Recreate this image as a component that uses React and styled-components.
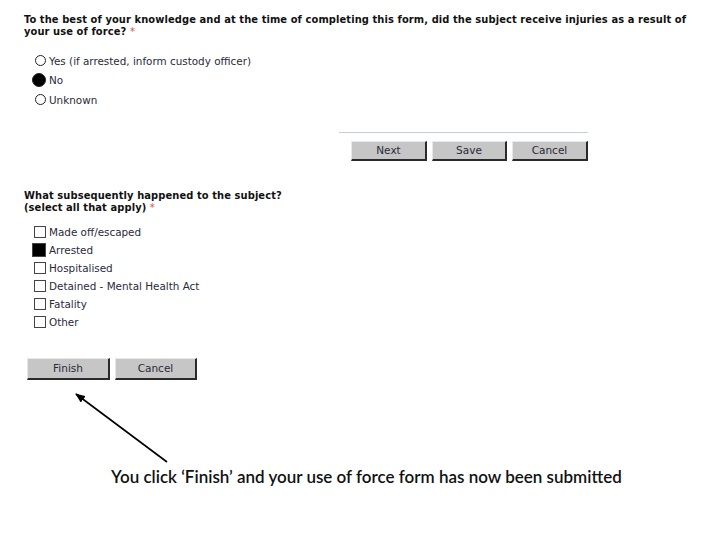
import React from "react";
import styled, { createGlobalStyle } from "styled-components";

const GlobalStyle = createGlobalStyle`
  html, body {
    margin: 0;
    padding: 0;
    background: #ffffff;
  }
`;

const injuryOptions = [
  { label: "Yes (if arrested, inform custody officer)", checked: false },
  { label: "No", checked: true },
  { label: "Unknown", checked: false },
];

const outcomeOptions = [
  { label: "Made off/escaped", checked: false },
  { label: "Arrested", checked: true },
  { label: "Hospitalised", checked: false },
  { label: "Detained - Mental Health Act", checked: false },
  { label: "Fatality", checked: false },
  { label: "Other", checked: false },
];

const App = () => {
  return (
    <>
      <GlobalStyle />
      <Page>
        <Question>
          To the best of your knowledge and at the time of completing this
          form, did the subject receive injuries as a result of
          <br />
          your use of force? <Required>*</Required>
        </Question>

        <OptionList>
          {injuryOptions.map((opt) => (
            <Option key={opt.label}>
              <Radio $checked={opt.checked} />
              <OptionLabel>{opt.label}</OptionLabel>
            </Option>
          ))}
        </OptionList>

        <ActionArea>
          <Divider />
          <ButtonRow $indent={12}>
            <Button $width={76}>Next</Button>
            <Button $width={75}>Save</Button>
            <Button $width={76}>Cancel</Button>
          </ButtonRow>
        </ActionArea>

        <Question $top={29}>
          What subsequently happened to the subject?
          <br />
          (select all that apply) <Required>*</Required>
        </Question>

        <CheckList>
          {outcomeOptions.map((opt) => (
            <CheckItem key={opt.label}>
              <Checkbox $checked={opt.checked} />
              <OptionLabel>{opt.label}</OptionLabel>
            </CheckItem>
          ))}
        </CheckList>

        <ButtonRow $top={27} $indent={3}>
          <Button $width={83} $height={22}>
            Finish
          </Button>
          <Button $width={82} $height={22}>
            Cancel
          </Button>
        </ButtonRow>

        <Caption>
          You click ‘Finish’ and your use of force form has now been submitted
        </Caption>

        {/* annotation arrow pointing at the Finish button */}
        <Arrow width="720" height="540" viewBox="0 0 720 540">
          <defs>
            <marker
              id="head"
              markerWidth="10"
              markerHeight="8"
              refX="9"
              refY="4"
              orient="auto"
              markerUnits="userSpaceOnUse"
            >
              <path d="M0,0 L10,4 L0,8 Z" fill="#000" />
            </marker>
          </defs>
          <line
            x1="167"
            y1="462"
            x2="76"
            y2="394"
            stroke="#000"
            strokeWidth="1.6"
            markerEnd="url(#head)"
          />
        </Arrow>
      </Page>
    </>
  );
};

// Styled Components
const Page = styled.div`
  position: relative;
  width: 720px;
  height: 540px;
  box-sizing: border-box;
  padding: 14px 0 0 24px;
  overflow: hidden;
  font-family: "DejaVu Sans", Verdana, sans-serif;
`;

const Question = styled.div`
  margin-top: ${(props) => props.$top || 0}px;
  font-family: "DejaVu Sans Condensed", "DejaVu Sans", Verdana, sans-serif;
  font-size: 11px;
  font-weight: bold;
  line-height: 12px;
  color: #111;
  letter-spacing: 0.1px;
  white-space: nowrap;
`;

const Required = styled.span`
  color: #e2474a;
  font-weight: normal;
`;

const OptionList = styled.div`
  display: flex;
  flex-direction: column;
  margin-top: 13px;
  padding-left: 8px;
`;

const Option = styled.div`
  display: flex;
  align-items: center;
  height: 19.5px;
`;

const Radio = styled.span`
  box-sizing: border-box;
  width: ${(props) => (props.$checked ? 14 : 11)}px;
  height: ${(props) => (props.$checked ? 14 : 11)}px;
  margin-left: ${(props) => (props.$checked ? 0 : 3)}px;
  margin-right: 3px;
  border-radius: 50%;
  border: 1px solid #222;
  background: ${(props) => (props.$checked ? "#000" : "#fff")};
`;

const OptionLabel = styled.span`
  font-size: 10.4px;
  color: #2a2a3a;
  white-space: nowrap;
`;

const ActionArea = styled.div`
  display: flex;
  flex-direction: column;
  margin: 22px 0 0 315px;
  width: 249px;
`;

const Divider = styled.div`
  height: 1px;
  background: #c3cfe0;
`;

const ButtonRow = styled.div`
  display: flex;
  gap: 5px;
  margin-top: ${(props) => (props.$top !== undefined ? props.$top : 8)}px;
  padding-left: ${(props) => props.$indent || 0}px;
`;

const Button = styled.div`
  box-sizing: border-box;
  display: flex;
  align-items: center;
  justify-content: center;
  width: ${(props) => props.$width}px;
  height: ${(props) => props.$height || 20}px;
  background: #c6c6c6;
  border-top: 1px solid #e8e8e8;
  border-left: 1px solid #e8e8e8;
  border-right: 2px solid #2a2a2a;
  border-bottom: 2px solid #2a2a2a;
  font-size: 10.5px;
  color: #2a2a3a;
`;

const CheckList = styled.div`
  display: flex;
  flex-direction: column;
  margin-top: 9px;
  padding-left: 8px;
`;

const CheckItem = styled.div`
  display: flex;
  align-items: center;
  height: 18px;
`;

const Checkbox = styled.span`
  box-sizing: border-box;
  width: ${(props) => (props.$checked ? 14 : 12)}px;
  height: ${(props) => (props.$checked ? 14 : 12)}px;
  margin-left: ${(props) => (props.$checked ? 0 : 2)}px;
  margin-right: 3px;
  border: 1px solid #444;
  background: ${(props) => (props.$checked ? "#000" : "#fff")};
`;

const Caption = styled.div`
  margin: 86px 0 0 87px;
  font-family: "Lato", "Open Sans", sans-serif;
  font-size: 17px;
  font-weight: 600;
  color: #111;
  white-space: nowrap;
`;

const Arrow = styled.svg`
  position: absolute;
  left: 0;
  top: 0;
  pointer-events: none;
`;

export default App;
